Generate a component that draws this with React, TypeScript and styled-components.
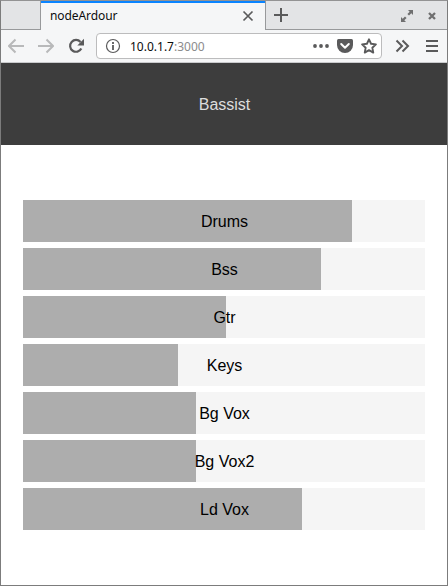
import React from "react";
import styled, { createGlobalStyle } from "styled-components";

const GlobalStyle = createGlobalStyle`
  html, body { margin: 0; padding: 0; }
  *, *::before, *::after { box-sizing: border-box; }
`;

const BrowserWindow = styled.div`
  display: flex;
  flex-direction: column;
  width: 448px;
  height: 586px;
  border: 1px solid #7c7c7c;
  border-top-color: #939394;
  background: #fff;
  overflow: hidden;
  font-family: "Noto Sans", sans-serif;
  font-size: 12px;
`;

const TabStrip = styled.div`
  display: flex;
  flex: none;
  height: 29px;
  background: #e3e4e6;
`;

const StripSpace = styled.div<{ $width?: number }>`
  display: flex;
  align-items: center;
  ${(p) => (p.$width ? `flex: none; width: ${p.$width}px;` : "flex: 1;")}
  border-bottom: 1px solid #98999b;
`;

const Tab = styled.div`
  display: flex;
  flex: none;
  align-items: center;
  justify-content: space-between;
  width: 226px;
  padding: 1px 9px 0 9px;
  border: solid #98999b;
  border-width: 0 1px;
  box-shadow: inset 0 2px #0a84ff;
  background: #f5f6f7;
  color: #0c0c0d;
`;

const TabTitle = styled.span`
  margin-top: -1px;
  letter-spacing: -0.08px;
`;

const WindowControls = styled.div`
  display: flex;
  gap: 14px;
  margin-left: auto;
  padding: 2px 10px 0 0;
`;

const Toolbar = styled.div`
  display: flex;
  flex: none;
  align-items: center;
  height: 33px;
  padding: 0 8px 0 7px;
  border-bottom: 1px solid #c9cacc;
  background: #f5f6f7;
`;

const NavButtons = styled.div`
  display: flex;
  gap: 14px;
  margin-right: 12px;
`;

const AddressBar = styled.div`
  display: flex;
  align-items: center;
  width: 286px;
  height: 26px;
  padding: 0 4px 0 8px;
  border: 1px solid #bcbcbd;
  border-radius: 4px;
  background: #fff;
`;

const Address = styled.span`
  flex: 1;
  margin-left: 9px;
  color: #0c0c0d;
`;

const Port = styled.span`
  color: #8b8b8c;
`;

const AddressActions = styled.div`
  display: flex;
  gap: 8px;
`;

const MenuButtons = styled.div`
  display: flex;
  gap: 14px;
  margin-left: auto;
`;

const Icon = styled.svg`
  display: block;
  flex: none;
  fill: none;
  stroke: currentColor;
  color: #5a5a5b;
  stroke-width: 2;
`;

const MutedIcon = styled(Icon)`
  color: #b8b9ba;
`;

const PageHeader = styled.header`
  display: flex;
  flex: none;
  align-items: center;
  justify-content: center;
  height: 82px;
  padding: 2px 0 0 1px;
  background: #3d3d3d;
  color: #ddd;
  font: 16px/20px "Liberation Sans", Arial, sans-serif;
`;

const Mixer = styled.main`
  display: flex;
  flex-direction: column;
  gap: 6px;
  padding: 55px 22px 0;
`;

const Channel = styled.div<{ $level: number }>`
  display: flex;
  align-items: center;
  justify-content: center;
  width: 402px;
  height: 42px;
  padding: 2px 0 0 1px;
  background: linear-gradient(#adadad, #adadad) 0 0 / ${(p) => p.$level}px 100% no-repeat #f5f5f5;
  color: #000;
  font: 16px/20px "Liberation Sans", Arial, sans-serif;
`;

const channels = [
  { name: "Drums", level: 329 },
  { name: "Bss", level: 298 },
  { name: "Gtr", level: 203 },
  { name: "Keys", level: 155 },
  { name: "Bg Vox", level: 173 },
  { name: "Bg Vox2", level: 173 },
  { name: "Ld Vox", level: 279 },
];

export default function App() {
  return (
    <>
      <GlobalStyle />
      <BrowserWindow>
        <TabStrip>
          <StripSpace $width={39} />
          <Tab>
            <TabTitle>nodeArdour</TabTitle>
            <Icon width="16" height="16" viewBox="0 0 16 16">
              <path d="M3.5 3.5l9 9M12.5 3.5l-9 9" strokeWidth="1.7" />
            </Icon>
          </Tab>
          <StripSpace>
            <Icon width="30" height="28" viewBox="0 0 30 28">
              <path d="M15 7v14M8 14h14" />
            </Icon>
            <WindowControls>
              <Icon width="12" height="12" viewBox="0 0 12 12">
                <path d="M7 0h5v5l-1.7-1.7-2.3 2.3-1.6-1.6 2.3-2.3zM5 12H0V7l1.7 1.7L4 6.4 5.6 8l-2.3 2.3z" fill="currentColor" stroke="none" opacity=".85" />
              </Icon>
              <Icon width="10" height="12" viewBox="0 0 10 12">
                <path d="M2 3l6 6M8 3L2 9" strokeWidth="2.3" opacity=".85" />
              </Icon>
            </WindowControls>
          </StripSpace>
        </TabStrip>
        <Toolbar>
          <NavButtons>
            <MutedIcon width="16" height="16" viewBox="0 0 16 16">
              <path d="M16 8H1.5M7.500 1.500L1 8l6.500 6.500" />
            </MutedIcon>
            <MutedIcon width="16" height="16" viewBox="0 0 16 16">
              <path d="M0 8h14.500M8.500 1.500L15 8l-6.500 6.500" />
            </MutedIcon>
            <Icon width="16" height="16" viewBox="0 0 16 16">
              <path d="M12.500 4A5.900 5.900 0 1 0 13.300 10.500" strokeWidth="2.200" />
              <path d="M16 .8V7.500H9.300z" fill="currentColor" stroke="none" />
            </Icon>
          </NavButtons>
          <AddressBar>
            <Icon width="16" height="16" viewBox="0 0 16 16">
              <circle cx="8" cy="8" r="6.500" strokeWidth="1.200" />
              <path d="M8 7v5M8 4v2" strokeWidth="1.800" />
            </Icon>
            <Address>
              10.0.1.7<Port>:3000</Port>
            </Address>
            <AddressActions>
              <Icon width="16" height="16" viewBox="0 0 16 16">
                <g fill="currentColor" stroke="none">
                  <circle cx="2" cy="8" r="1.900" />
                  <circle cx="8" cy="8" r="1.900" />
                  <circle cx="14" cy="8" r="1.900" />
                </g>
              </Icon>
              <Icon width="16" height="16" viewBox="0 0 16 16">
                <path d="M1.500 1h13Q16 1 16 2.500V7a8 8 0 0 1-16 0V2.500Q0 1 1.500 1z" fill="currentColor" stroke="none" />
                <path d="M4.200 6L8 9.700 11.800 6" stroke="#fff" strokeLinecap="round" strokeLinejoin="round" />
              </Icon>
              <Icon width="16" height="16" viewBox="0 0 16 16">
                <path d="M8 1.300l2.050 4.450 4.850.6-3.550 3.350.9 4.850L8 12.200l-4.250 2.350.9-4.850L1.100 6.350l4.850-.6z" strokeWidth="1.900" strokeLinejoin="round" />
              </Icon>
            </AddressActions>
          </AddressBar>
          <MenuButtons>
            <Icon width="16" height="16" viewBox="0 0 16 16">
              <path d="M1.500 2.500L7 8l-5.500 5.500M7.500 2.500L13 8l-5.500 5.500" />
            </Icon>
            <Icon width="14" height="16" viewBox="0 0 14 16">
              <path d="M1 3h12M1 8h12M1 13h12" />
            </Icon>
          </MenuButtons>
        </Toolbar>
        <PageHeader>Bassist</PageHeader>
        <Mixer>
          {channels.map((channel) => (
            <Channel key={channel.name} $level={channel.level}>
              {channel.name}
            </Channel>
          ))}
        </Mixer>
      </BrowserWindow>
    </>
  );
}
